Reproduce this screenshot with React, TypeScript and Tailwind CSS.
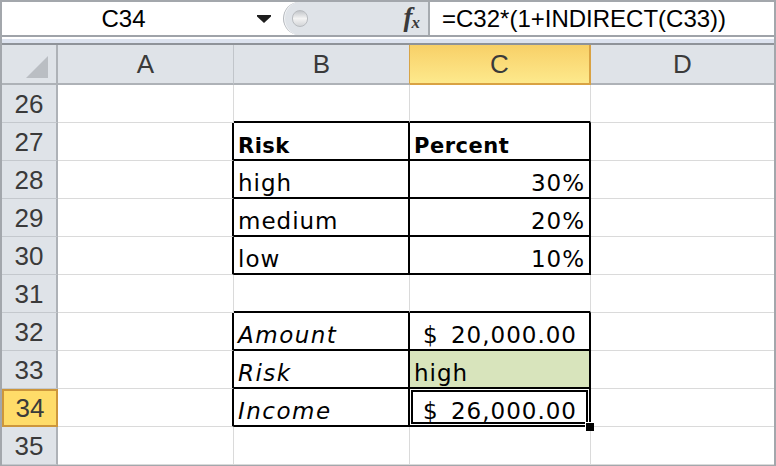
import type { ReactNode } from 'react'

type Row = {
  n: number
  b?: ReactNode
  c?: ReactNode
  money?: string
  table?: boolean
  edgeBelow?: boolean
  right?: boolean
  green?: boolean
  selected?: boolean
}

const rows: Row[] = [
  { n: 26, edgeBelow: true },
  {
    n: 27,
    table: true,
    b: <span className="text-[21px] font-bold tracking-[0.5px]">Risk</span>,
    c: <span className="text-[21px] font-bold tracking-[0.5px]">Percent</span>,
  },
  { n: 28, table: true, b: 'high', c: '30%', right: true },
  { n: 29, table: true, b: 'medium', c: '20%', right: true },
  { n: 30, table: true, b: 'low', c: '10%', right: true },
  { n: 31, edgeBelow: true },
  { n: 32, table: true, b: <span className="italic tracking-[1.5px]">Amount</span>, money: '20,000.00' },
  { n: 33, table: true, b: <span className="italic tracking-[1.5px]">Risk</span>, c: 'high', green: true },
  { n: 34, table: true, b: <span className="italic tracking-[1.5px]">Income</span>, money: '26,000.00', selected: true },
  { n: 35 },
]

const FormulaBar = () => (
  <div className="flex h-[33px] bg-white font-['Liberation_Sans',Arial,sans-serif] text-black">
    {/* name box */}
    <div className="flex w-[281px] items-center">
      <div className="w-[243px] text-center text-[24px] leading-none">C34</div>
      <div className="flex flex-1 justify-center">
        <svg width="14" height="8" viewBox="0 0 14 8">
          <path d="M0 0H14V1.5L7 8L0 1.5Z" fill="#1e1e1e" />
        </svg>
      </div>
    </div>

    {/* grip + fx */}
    <div className="flex w-[147px] items-center justify-between rounded-l-[17px] border-l border-r-2 border-l-[#b3b7bc] border-r-[#a6abb0] bg-[#dfe3e8] shadow-[inset_1px_0_0_#f4f5f7]">
      <div className="ml-[8px] h-[17px] w-[16px] rounded-full border border-[#b9bcc0] bg-linear-to-b from-[#c3c6ca] via-[#f4f4f4] to-[#d3d5d8]" />
      <div className="mr-[8px] flex items-end pb-[2px] font-['Liberation_Serif',serif] italic font-bold text-[#3a3a3a]">
        <span className="text-[27px] leading-none">f</span>
        <span className="-ml-[1px] text-[17px] leading-none">x</span>
      </div>
    </div>

    {/* formula */}
    <div className="flex flex-1 items-center pl-[12px] text-[24px] leading-none">=C32*(1+INDIRECT(C33))</div>
  </div>
)

const ColumnHeaders = () => (
  <div className="grid h-[40px] grid-cols-[56px_176px_176px_181px_1fr] bg-[#dfe3e8] font-['Liberation_Sans',Arial,sans-serif] text-[26px] leading-none text-[#3a3a3a]">
    <div className="flex items-end justify-end border-r-2 border-b-2 border-[#aeb2b7] pr-[8px] pb-[5px]">
      <svg width="22" height="22" viewBox="0 0 22 22">
        <path d="M22 0V22H0Z" fill="#babec3" />
      </svg>
    </div>
    <div className="flex items-center justify-center border-r border-b-2 border-r-[#c1c5ca] border-b-[#aeb2b7]">A</div>
    <div className="flex items-center justify-center border-r border-b-2 border-r-[#d7a446] border-b-[#aeb2b7]">B</div>
    <div className="flex items-center justify-center border-r-2 border-b-2 border-[#d9a243] bg-linear-to-b from-[#f8d067] to-[#fde98c]">C</div>
    <div className="flex items-center justify-center border-b-2 border-[#aeb2b7]">D</div>
  </div>
)

const SheetRow = ({ r }: { r: Row }) => {
  const aCls = r.table
    ? 'border-r-2 border-b border-r-black border-b-[#dadada]'
    : 'border-r border-b border-[#dadada]'

  const bCls = r.table
    ? 'flex items-end px-[4px] pb-[2px] tracking-[1px] border-r-2 border-b-2 border-black'
    : r.edgeBelow
      ? 'border-r border-b-2 border-r-[#dadada] border-b-black'
      : 'border-r border-b border-[#dadada]'

  let cCls = r.table
    ? 'relative flex items-end px-[4px] pb-[2px] tracking-[1px] border-r-2 border-b-2 border-black'
    : r.edgeBelow
      ? 'border-r border-b-2 border-r-[#dadada] border-b-black'
      : 'border-r border-b border-[#dadada]'
  if (r.right) cCls += ' justify-end'
  if (r.green) cCls += ' bg-[#d8e4bc]'
  if (r.money) cCls += ' justify-between pl-[13px] pr-[13px]'
  if (r.selected) cCls += ' shadow-[inset_0_0_0_1px_#fff,inset_0_0_0_3px_#000]'

  return (
    <div className="grid h-[38px] grid-cols-[56px_176px_176px_181px_1fr] font-['DejaVu_Sans',sans-serif] text-[23px] leading-none text-black">
      <div
        className={
          r.selected
            ? "flex items-center justify-center border-2 border-[#cd963b] bg-[#ffdc69] font-['Liberation_Sans',Arial,sans-serif] text-[26px] text-[#3a3a3a]"
            : "flex items-center justify-center border-r-2 border-b border-r-[#aeb2b7] border-b-[#c4c8cd] bg-[#dfe3e8] font-['Liberation_Sans',Arial,sans-serif] text-[26px] text-[#3a3a3a]"
        }
      >
        {r.n}
      </div>
      <div className={aCls} />
      <div className={bCls}>{r.b}</div>
      <div className={cCls}>
        {r.money ? (
          <>
            <span>$</span>
            <span className="-mr-[1px]">{r.money}</span>
          </>
        ) : (
          r.c
        )}
        {r.selected && (
          <div className="absolute -right-[5px] -bottom-[6px] z-10 h-[9px] w-[9px] border-t border-l border-white bg-black" />
        )}
      </div>
      <div className="border-b border-[#dadada]" />
    </div>
  )
}

export default function App() {
  return (
    <div className="h-[466px] w-[776px] overflow-hidden border-x-2 border-t-2 border-b border-[#a3a7ac] bg-white">
      <FormulaBar />
      <div className="h-[2px] bg-[#9fa3a9]" />
      <div className="h-[2px] bg-white" />
      <div className="h-[4px] bg-[#dde3ef]" />
      <div className="h-[2px] bg-[#8f9399]" />
      <ColumnHeaders />
      {rows.map((r) => (
        <SheetRow key={r.n} r={r} />
      ))}
    </div>
  )
}
